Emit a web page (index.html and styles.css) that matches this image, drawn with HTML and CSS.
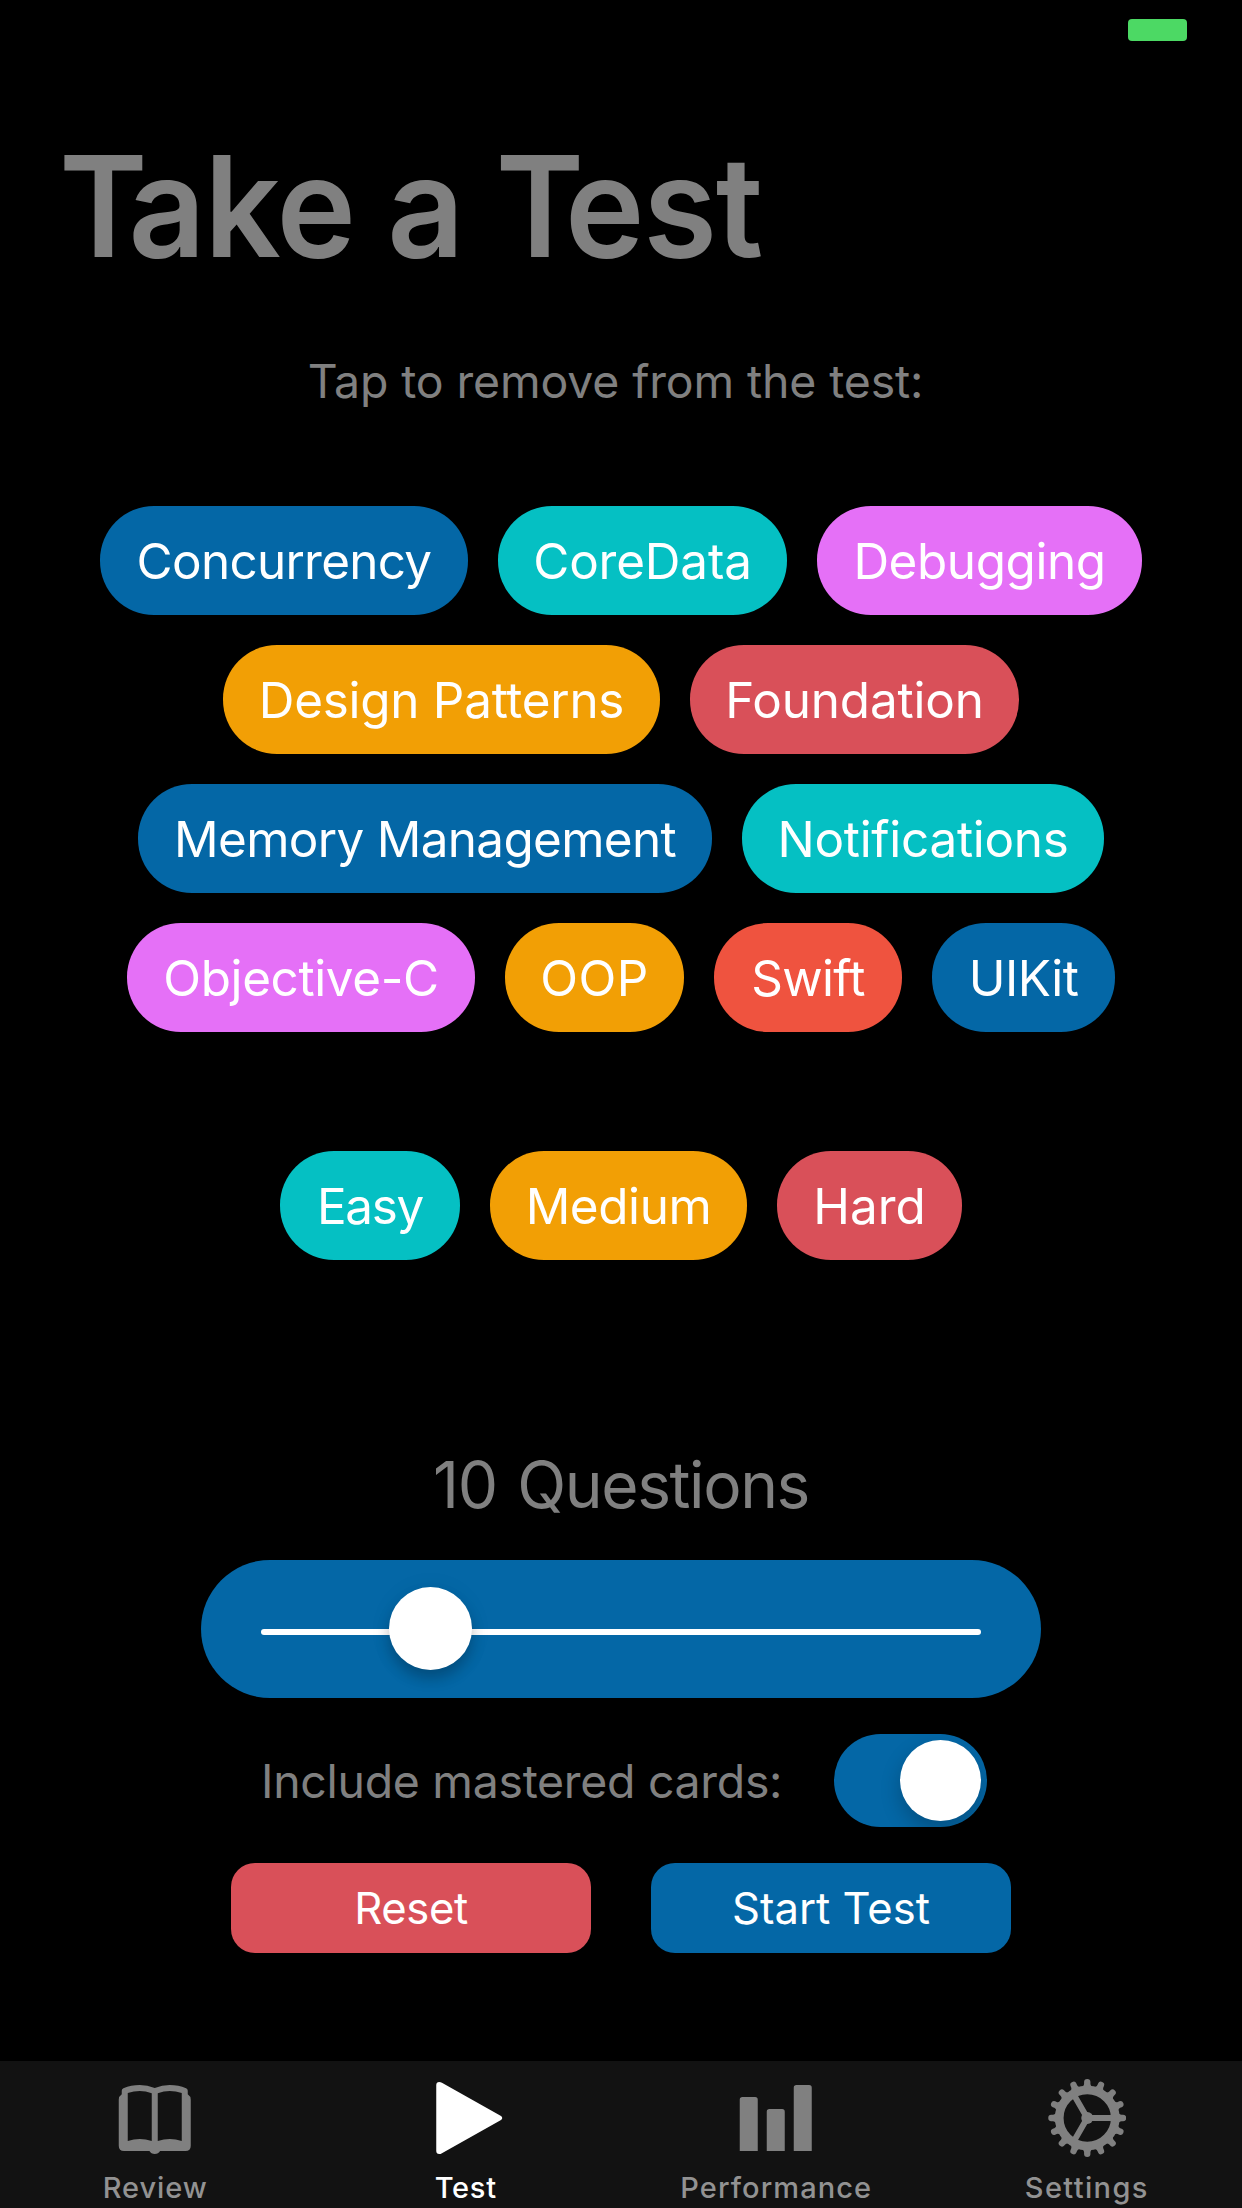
FILE: index.html
```html
<!DOCTYPE html>
<html lang="en">
<head>
<meta charset="utf-8">
<title>Take a Test</title>
<link rel="stylesheet" href="styles.css">
</head>
<body>
<div class="screen">
  <header class="status"><span class="battery"></span></header>
  <main class="content">
    <h1 class="title"><span class="kern">T</span>ake a <span class="kern">T</span>est</h1>
    <p class="hint">Tap to remove from the test:</p>

    <section class="topics">
      <div class="row">
        <button class="pill blue concurrency">Concurrency</button>
        <button class="pill teal coredata">CoreData</button>
        <button class="pill pink debugging">Debugging</button>
      </div>
      <div class="row">
        <button class="pill orange patterns">Design Patterns</button>
        <button class="pill red foundation">Foundation</button>
      </div>
      <div class="row">
        <button class="pill blue memory">Memory Management</button>
        <button class="pill teal notifications">Notifications</button>
      </div>
      <div class="row">
        <button class="pill pink objc">Objective-C</button>
        <button class="pill orange oop">OOP</button>
        <button class="pill coral swift">Swift</button>
        <button class="pill blue uikit">UIKit</button>
      </div>
    </section>

    <section class="row levels">
      <button class="pill teal easy">Easy</button>
      <button class="pill orange medium">Medium</button>
      <button class="pill red hard">Hard</button>
    </section>

    <p class="count">10 Questions</p>
    <div class="slider">
      <div class="track"><span class="thumb"></span></div>
    </div>

    <div class="mastered">
      <span class="mastered-label">Include mastered cards:</span>
      <span class="switch"><span class="knob"></span></span>
    </div>

    <div class="actions">
      <button class="action red reset">Reset</button>
      <button class="action blue">Start Test</button>
    </div>
  </main>

  <nav class="tabs">
    <a class="tab">
      <svg class="icon" viewBox="78.75 87 234 234">
        <path fill-rule="evenodd" d="M96 122Q96 117 101 115Q124 105 150 105Q173 105 195 114Q217 105 240 105Q266 105 289 115Q294 117 294 122V133Q303 139 303 149V287Q303 303 287 303H211Q206 312 195 312Q184 312 179 303H103Q87 303 87 287V149Q87 139 96 133ZM114 129V273Q132 267 150 267Q168 267 186 273V130Q168 123 150 123Q132 123 114 129ZM204 130V273Q222 267 240 267Q258 267 276 273V129Q258 123 240 123Q222 123 204 130Z"/>
      </svg>
      <span class="label review">Review</span>
    </a>
    <a class="tab active">
      <svg class="icon" viewBox="80.25 87 234 234">
        <path d="M108 105Q108 96 117 96Q121 96 125 98.500L301 197Q306 200 306 204Q306 208 301 211L125 309.500Q121 312 117 312Q108 312 108 303Z"/>
      </svg>
      <span class="label test">Test</span>
    </a>
    <a class="tab">
      <svg class="icon" viewBox="231.75 87 234 234">
        <path d="M240 303V149Q240 141 248 141H286Q294 141 294 149V303ZM321 303V185Q321 177 329 177H367Q375 177 375 185V303ZM402 303V113Q402 105 410 105H448Q456 105 456 113V303Z"/>
      </svg>
      <span class="label performance">Performance</span>
    </a>
    <a class="tab">
      <svg class="icon" viewBox="-117.75 -117 234 234">
        <defs>
          <path id="tooth" d="M-21 -90Q-9.500 -96 -9.500 -103V-108A9.500 9 0 0 1 9.500 -108V-103Q9.500 -96 21 -90Z"/>
          <g id="quarter">
            <use href="#tooth"/>
            <use href="#tooth" transform="rotate(22.5)"/>
            <use href="#tooth" transform="rotate(45)"/>
            <use href="#tooth" transform="rotate(67.5)"/>
          </g>
        </defs>
        <use href="#quarter"/>
        <use href="#quarter" transform="rotate(90)"/>
        <use href="#quarter" transform="rotate(180)"/>
        <use href="#quarter" transform="rotate(270)"/>
        <circle class="line" r="84" stroke-width="26"/>
        <circle r="18"/>
        <path class="line" stroke-width="18" d="M0 0H76M0 0L-38 -65.800M0 0L-38 65.800"/>
      </svg>
      <span class="label settings">Settings</span>
    </a>
  </nav>
</div>
</body>
</html>
```
FILE: styles.css
```css
* { box-sizing: border-box; }

body {
  margin: 0;
  background: #000;
  font-family: Inter, "Liberation Sans", sans-serif;
}

.screen {
  width: 1242px;
  height: 2208px;
  display: flex;
  flex-direction: column;
  overflow: hidden;
  background: #000;
  color: #808080;
}

button {
  border: 0;
  padding: 0;
  font-family: inherit;
  color: #fff;
  text-align: center;
  white-space: nowrap;
}

/* status bar */
.status {
  height: 60px;
  padding: 19px 55px 0 0;
  display: flex;
  justify-content: flex-end;
}
.battery {
  width: 59px;
  height: 22px;
  border-radius: 4px;
  background: #4cd964;
}

.content {
  flex: 1;
  display: flex;
  flex-direction: column;
  align-items: center;
}

.title {
  align-self: flex-start;
  margin: 66px 0 0 59px;
  font-size: 140px;
  line-height: 160px;
  font-weight: 600;
  letter-spacing: -1.400px;
  white-space: nowrap;
  transform: scaleX(0.96);
  transform-origin: left;
}
.kern { letter-spacing: -20px; }
.hint {
  margin: 65px 11px 0 0;
  font-size: 46.400px;
  line-height: 60px;
  letter-spacing: -0.120px;
}

/* pills */
.blue { background: #0467a6; }
.teal { background: #05c0c3; }
.pink { background: #e570f7; }
.orange { background: #f29f05; }
.red { background: #d95059; }
.coral { background: #ef533f; }

.topics {
  margin-top: 95px;
  display: flex;
  flex-direction: column;
  gap: 30px;
}
.row {
  display: flex;
  justify-content: center;
  gap: 30px;
}
.levels { margin-top: 119px; }

.pill {
  height: 109px;
  padding-top: 1px;
  border-radius: 54px;
  font-size: 49.400px;
  line-height: 108px;
}
.concurrency { width: 368px; letter-spacing: -0.690px; }
.coredata { width: 289px; letter-spacing: -0.150px; }
.debugging { width: 325px; letter-spacing: -0.410px; }
.patterns { width: 437px; letter-spacing: -0.260px; }
.foundation { width: 329px; letter-spacing: -0.170px; }
.memory { width: 574px; letter-spacing: -0.660px; }
.notifications { width: 362px; letter-spacing: -0.290px; }
.objc { width: 348px; letter-spacing: -0.370px; }
.oop { width: 179px; letter-spacing: 0.430px; }
.swift { width: 188px; letter-spacing: -0.640px; }
.uikit { width: 183px; letter-spacing: -0.480px; }
.easy { width: 180px; letter-spacing: -1.260px; }
.medium { width: 257px; letter-spacing: -0.400px; }
.hard { width: 185px; }

/* question count */
.count {
  margin: 185px 0 0;
  font-size: 64px;
  line-height: 80px;
  letter-spacing: -1.400px;
  word-spacing: 4px;
}
.slider {
  margin-top: 35px;
  width: 840px;
  height: 138px;
  padding: 69px 60px 0;
  border-radius: 69px;
  background: #0467a6;
}
.track {
  position: relative;
  height: 6px;
  border-radius: 3px;
  background: #fff;
}
.thumb {
  position: absolute;
  left: 128px;
  top: -42px;
  width: 83px;
  height: 83px;
  border-radius: 50%;
  background: #fff;
  box-shadow: 0 9px 14px rgba(0, 0, 0, 0.22), 0 2px 26px rgba(0, 0, 0, 0.05);
}

/* mastered switch */
.mastered {
  margin: 36px 0 0 6px;
  width: 726px;
  height: 93px;
  display: flex;
  align-items: center;
  justify-content: space-between;
}
.mastered-label {
  font-size: 46.400px;
  line-height: 60px;
  letter-spacing: -0.280px;
  white-space: nowrap;
}
.switch {
  width: 153px;
  height: 93px;
  padding: 6px;
  display: flex;
  justify-content: flex-end;
  border-radius: 47px;
  overflow: hidden;
  background: #0467a6;
}
.knob {
  width: 81px;
  height: 81px;
  border-radius: 50%;
  background: #fff;
  box-shadow: 0 9px 20px rgba(0, 0, 0, 0.22);
}

.actions {
  margin-top: 36px;
  display: flex;
  gap: 60px;
}
.action {
  width: 360px;
  height: 90px;
  padding-top: 2px;
  border-radius: 24px;
  font-size: 43.600px;
  line-height: 88px;
}
.reset { letter-spacing: -0.360px; }

/* tab bar */
.tabs {
  height: 147px;
  display: flex;
  background: #121212;
}
.tab {
  flex: 1;
  padding-top: 18px;
  display: flex;
  flex-direction: column;
  align-items: center;
  color: #929292;
}
.icon {
  width: 78px;
  height: 78px;
  fill: #808080;
}
.icon .line {
  fill: none;
  stroke: #808080;
}
.label {
  margin-top: 13px;
  font-size: 29px;
  line-height: 36px;
  font-weight: 450;
}
.active { color: #fff; }
.active .icon { fill: #fff; }
.review { letter-spacing: 0.900px; }
.test { letter-spacing: 0.750px; }
.performance { letter-spacing: 1.100px; }
.settings { letter-spacing: 1.350px; }
```
